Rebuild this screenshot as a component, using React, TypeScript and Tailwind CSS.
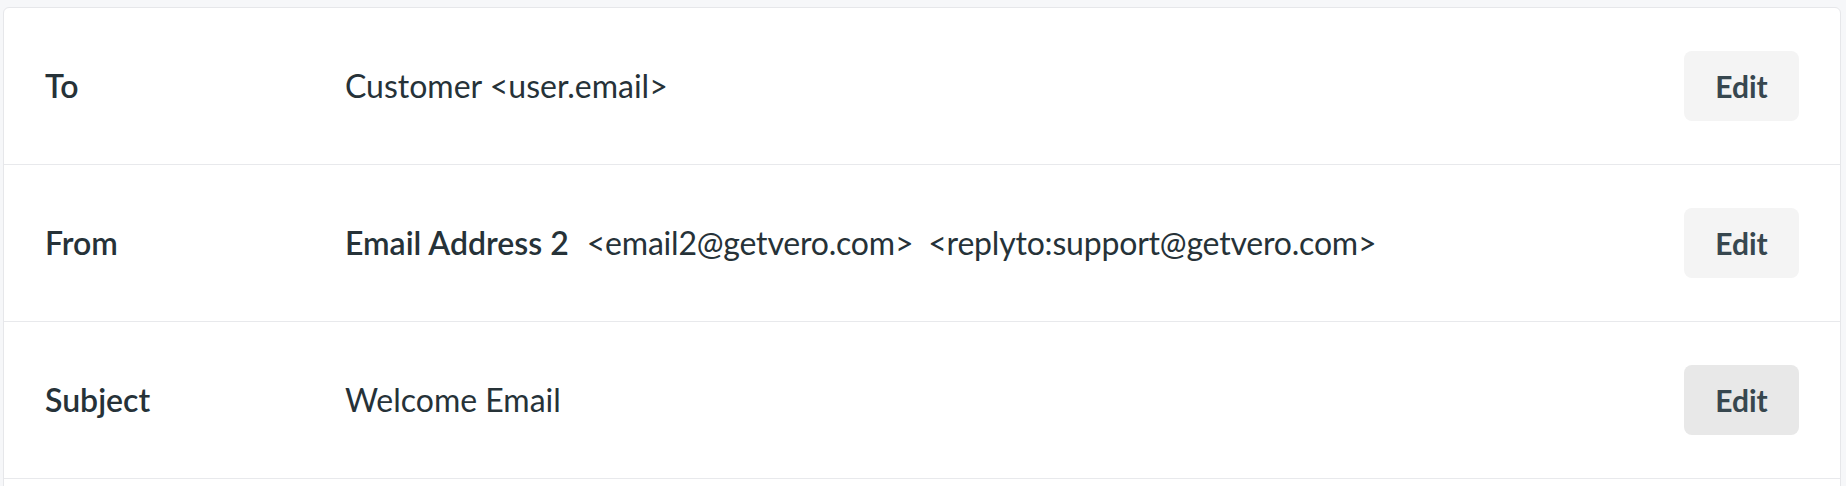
import React from "react";

interface RowProps {
  label: string;
  children: React.ReactNode;
  hovered?: boolean;
}

const Row: React.FC<RowProps> = ({ label, children, hovered }) => {
  return (
    <div className="flex h-[157px] items-center border-b border-[#e8e9ec] px-[41px]">
      <div className="w-[300px] shrink-0 text-[32px] font-semibold text-[#263238]">{label}</div>
      <div className="flex flex-1 items-center text-[32px] text-[#263238]">{children}</div>
      <button
        className={
          hovered
            ? "h-[70px] w-[115px] rounded-[8px] bg-[#e8e8e8] text-[30px] font-bold text-[#37474f]"
            : "h-[70px] w-[115px] rounded-[8px] bg-[#f4f4f4] text-[30px] font-bold text-[#37474f]"
        }
      >
        Edit
      </button>
    </div>
  );
};

export default function App() {
  return (
    <div
      className="h-[486px] overflow-hidden bg-[#f6f7f9] pl-[3px] pr-[5px] pt-[7px]"
      style={{ fontFamily: "Lato, 'Liberation Sans', sans-serif" }}
    >
      <div className="rounded-t-[6px] border border-[#e6e7ea] bg-white">
        <Row label="To">
          <span>Customer &lt;user.email&gt;</span>
        </Row>
        <Row label="From">
          <span className="font-semibold">Email Address 2</span>
          <span className="ml-[18px] tracking-[-0.2px]">&lt;email2@getvero.com&gt;</span>
          <span className="ml-[15px] tracking-[-0.2px]">&lt;replyto:support@getvero.com&gt;</span>
        </Row>
        <Row label="Subject" hovered>
          <span>Welcome Email</span>
        </Row>
        <div className="h-[157px]" />
      </div>
    </div>
  );
}
